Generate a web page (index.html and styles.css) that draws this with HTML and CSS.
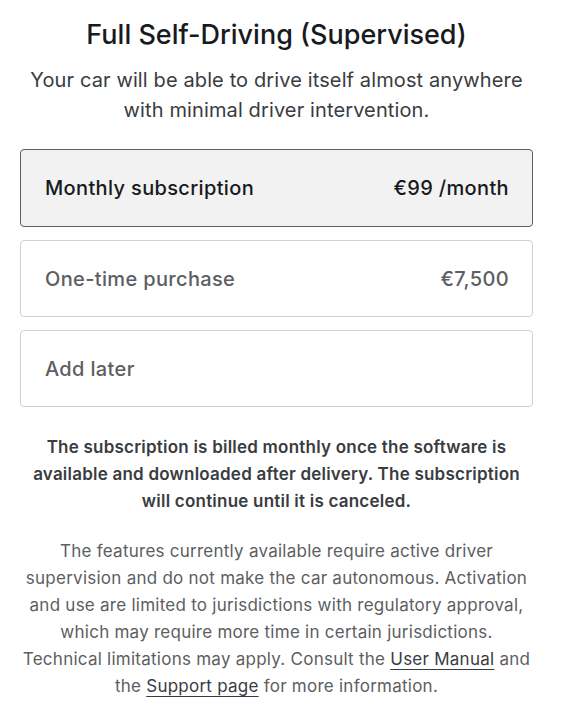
FILE: index.html
```html
<!DOCTYPE html>
<html lang="en">
<head>
<meta charset="utf-8">
<title>Full Self-Driving (Supervised)</title>
<link rel="stylesheet" href="styles.css">
</head>
<body>
<main class="panel">
  <h1 class="title">Full Self-Driving (Supervised)</h1>
  <p class="subtitle">Your car will be able to drive itself almost anywhere with minimal driver intervention.</p>
  <div class="options">
    <div class="option selected">
      <span class="label">Monthly subscription</span>
      <span class="price">€99 /month</span>
    </div>
    <div class="option">
      <span class="label">One-time purchase</span>
      <span class="price">€7,500</span>
    </div>
    <div class="option">
      <span class="label">Add later</span>
    </div>
  </div>
  <p class="billing">The subscription is billed monthly once the software is available and downloaded after delivery. The subscription will continue until it is canceled.</p>
  <p class="disclaimer">The features currently available require active driver supervision and do not make the car autonomous. Activation and use are limited to jurisdictions with regulatory approval, which may require more time in certain jurisdictions. Technical limitations may apply. Consult the <a href="#" class="link">User Manual</a> and the <a href="#" class="link">Support page</a> for more information.</p>
</main>
</body>
</html>
```
FILE: styles.css
```css
html, body {
  margin: 0;
  padding: 0;
  background: #ffffff;
}
body {
  font-family: Inter, "Noto Sans", "Liberation Sans", sans-serif;
  color: #171a20;
}
.panel {
  width: 513px;
  margin-left: 20px;
  padding-top: 19px;
  text-align: center;
}
.title {
  margin: 0;
  font-size: 27px;
  line-height: 32px;
  font-weight: 500;
  color: #171a20;
}
.subtitle {
  margin: 14px 0 0;
  font-size: 20px;
  line-height: 30px;
  font-weight: 400;
  letter-spacing: 0.12px;
  color: #393c41;
}
.options {
  margin-top: 24px;
  display: flex;
  flex-direction: column;
  gap: 13px;
}
.option {
  box-sizing: border-box;
  height: 77px;
  display: flex;
  align-items: center;
  justify-content: space-between;
  padding: 0 23px 0 24px;
  border: 1px solid #d0d1d2;
  border-radius: 4px;
  font-size: 20px;
  font-weight: 500;
  letter-spacing: 0.35px;
  color: #5c5e62;
}
.option.selected {
  height: 78px;
  background: #f2f2f2;
  border-color: #5c5e62;
  color: #171a20;
}
.billing {
  margin: 27px 0 0;
  font-size: 17px;
  line-height: 27px;
  font-weight: 600;
  letter-spacing: 0.22px;
  color: #393c41;
}
.disclaimer {
  margin: 23px 0 0;
  font-size: 17px;
  line-height: 27px;
  font-weight: 400;
  letter-spacing: 0.25px;
  color: #5c5e62;
}
.link {
  color: #393c41;
  text-decoration: underline;
  text-decoration-thickness: 1px;
  text-underline-offset: 4px;
}
```
